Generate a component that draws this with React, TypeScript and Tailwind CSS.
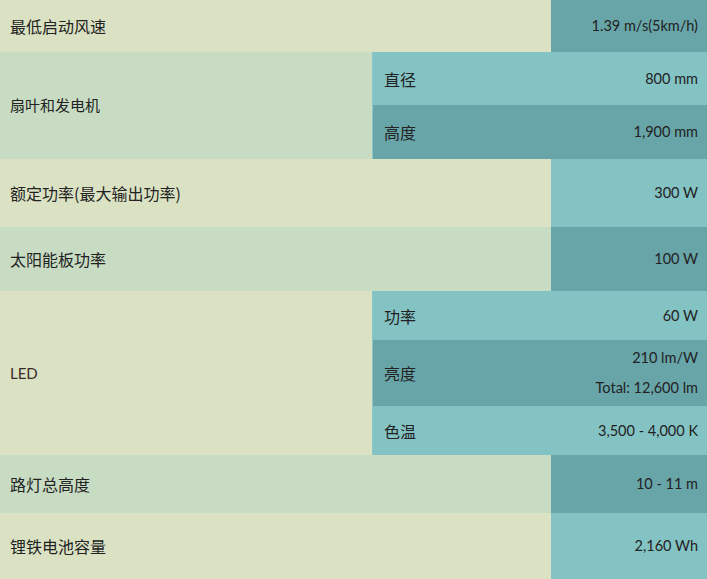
import React from 'react';

type Sub = { label: string; values: string[]; h: string };
type Row = { label: string; h?: string; value?: string; subs?: Sub[]; left: 'yellow' | 'green'; valueTone?: 'light' | 'dark' };

const tone = {
  yellow: 'bg-[#dae2c3]',
  green: 'bg-[#c8dcc3]',
  light: 'bg-[#84c3c4]',
  dark: 'bg-[#68a5a9]',
};

const rows: Row[] = [
  { label: '最低启动风速', h: 'h-[52px]', value: '1.39 m/s(5km/h)', left: 'yellow', valueTone: 'dark' },
  {
    label: '扇叶和发电机',
    left: 'green',
    subs: [
      { label: '直径', values: ['800 mm'], h: 'h-[53px]' },
      { label: '高度', values: ['1,900 mm'], h: 'h-[54px]' },
    ],
  },
  { label: '额定功率(最大输出功率)', h: 'h-[68px]', value: '300 W', left: 'yellow', valueTone: 'light' },
  { label: '太阳能板功率', h: 'h-[64px]', value: '100 W', left: 'green', valueTone: 'dark' },
  {
    label: 'LED',
    left: 'yellow',
    subs: [
      { label: '功率', values: ['60 W'], h: 'h-[49px]' },
      { label: '亮度', values: ['210 lm/W', 'Total: 12,600 lm'], h: 'h-[66px]' },
      { label: '色温', values: ['3,500 - 4,000 K'], h: 'h-[49px]' },
    ],
  },
  { label: '路灯总高度', h: 'h-[58px]', value: '10 - 11 m', left: 'green', valueTone: 'dark' },
  { label: '锂铁电池容量', h: 'h-[66px]', value: '2,160 Wh', left: 'yellow', valueTone: 'light' },
];

const cjk = "font-['Noto_Sans_CJK_SC','Noto_Sans',sans-serif]";
const latin = "font-['Lato','Noto_Sans_CJK_SC',sans-serif]";

export default function App() {
  return (
    <div className="w-[707px] h-[579px] overflow-hidden text-[#222]">
      {rows.map((row) => {
        if (row.subs) {
          return (
            <div key={row.label} className={`flex ${tone[row.left]}`}>
              <div className={`w-[372px] flex items-center pl-[10px] text-[15px] ${row.label === 'LED' ? `${latin} text-[#3a2a2a]` : cjk}`}>
                {row.label}
              </div>
              <div className="flex-1 flex flex-col">
                {row.subs.map((sub, i) => (
                  <div
                    key={sub.label}
                    className={`${sub.h} flex items-center justify-between pl-[11px] pr-[9px] border-l border-[#8ec6c6] ${i % 2 === 0 ? tone.light : tone.dark}`}
                  >
                    <span className={`${cjk} text-[16px]`}>{sub.label}</span>
                    <div className={`${latin} text-[14.5px] flex flex-col items-end gap-[8px]`}>
                      {sub.values.map((v) => (
                        <span key={v}>{v}</span>
                      ))}
                    </div>
                  </div>
                ))}
              </div>
            </div>
          );
        }
        return (
          <div key={row.label} className={`${row.h} flex`}>
            <div className={`flex-1 flex items-center pl-[10px] ${tone[row.left]} ${cjk} text-[16px]`}>{row.label}</div>
            <div className={`w-[156px] flex items-center justify-end pr-[9px] ${tone[row.valueTone!]} ${latin} text-[14.5px]`}>
              {row.value}
            </div>
          </div>
        );
      })}
    </div>
  );
}
